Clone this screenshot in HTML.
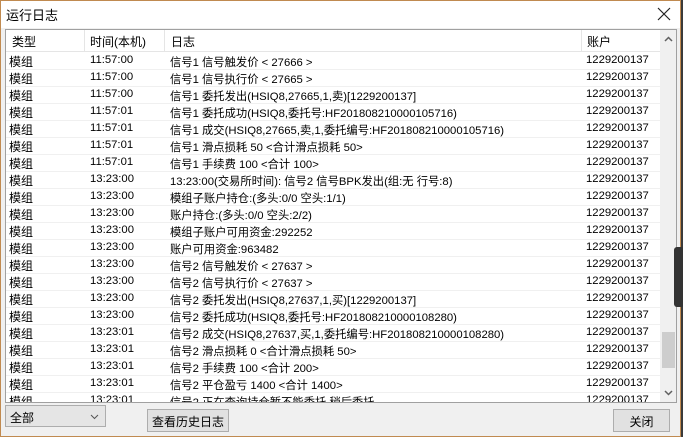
<!DOCTYPE html>
<html><head><meta charset="utf-8"><style>
*{margin:0;padding:0;box-sizing:border-box}
body{width:683px;height:437px;overflow:hidden;background:#3a3a3a;font-family:"Liberation Sans","Noto Sans CJK SC",sans-serif;font-size:12px;color:#000}
.win{position:absolute;left:0;top:0;width:681px;height:437px;border:1px solid #c08a50;background:#f0f0f0}
.title{position:absolute;left:0;top:0;width:679px;height:27px;background:#fff}
.title span{position:absolute;left:5px;top:4px;font-size:13px}
.close{position:absolute;left:656px;top:6px}
.list{position:absolute;left:4px;top:28px;width:672px;height:374px;background:#fff;border:1px solid #a0a0a0;overflow:hidden}
.hdr{position:absolute;left:0;top:0;width:654px;height:22px;background:#fff;border-bottom:1px solid #e5e5e5}
.hdr div{position:absolute;top:3px;font-size:12px}
.sep{position:absolute;top:0;width:1px;height:22px;background:#e5e5e5}
.row{position:absolute;left:0;width:654px;height:17px;border-bottom:1px solid #f0f0f0;white-space:nowrap;font-size:11.3px}
.row div{position:absolute;top:1px}
.row .c1{font-size:12px;top:0}
.c1{left:3px}.c2{left:84px}.c3{left:164px}.c4{left:580px}
.sb{position:absolute;left:654px;top:0;width:17px;height:372px;background:#f0f0f0}
.thumb{position:absolute;left:2px;top:302px;width:13px;height:36px;background:#cdcdcd}
.btn{position:absolute;background:#e1e1e1;border:1px solid #adadad;font-size:12px;padding:3px 4px}
.widget{position:absolute;left:673px;top:246px;width:10px;height:60px;background:#333;border-radius:3px}
</style></head><body>
<div class="win">
<div class="title"><span>运行日志</span><svg class="close" width="14" height="14"><path d="M1 1L13 13M13 1L1 13" stroke="#222" stroke-width="1.2"/></svg></div>
<div class="list">
<div class="hdr"><div style="left:6px">类型</div><div style="left:84px">时间(本机)</div><div style="left:165px">日志</div><div style="left:581px">账户</div>
<span class="sep" style="left:78px"></span><span class="sep" style="left:158px"></span><span class="sep" style="left:575px"></span></div>
<div class="sb"><svg style="position:absolute;left:4px;top:6px" width="9" height="6"><path d="M1 5L4.5 1.5L8 5" stroke="#606060" fill="none" stroke-width="1.5"/></svg><div class="thumb"></div><svg style="position:absolute;left:4px;top:360px" width="9" height="6"><path d="M1 1L4.5 4.5L8 1" stroke="#606060" fill="none" stroke-width="1.5"/></svg></div>
</div>
<div class="widget"></div>
<div style="position:absolute;left:4px;top:404px;width:101px;height:22px;background:#e5e5e5;border:1px solid #adadad;padding:3px 4px">全部<svg style="position:absolute;right:6px;top:8px" width="9" height="6"><path d="M1 1L4.5 4.5L8 1" stroke="#555" fill="none"/></svg></div>
<div class="btn" style="left:146px;top:408px;height:23px;width:82px">查看历史日志</div>
<div class="btn" style="left:612px;top:408px;height:23px;width:57px;text-align:center">关闭</div>
</div>
<script>
var d=[["11:57:00","信号1 信号触发价 &lt; 27666 &gt;"],["11:57:00","信号1 信号执行价 &lt; 27665 &gt;"],["11:57:00","信号1 委托发出(HSIQ8,27665,1,卖)[1229200137]"],["11:57:01","信号1 委托成功(HSIQ8,委托号:HF201808210000105716)"],["11:57:01","信号1 成交(HSIQ8,27665,卖,1,委托编号:HF201808210000105716)"],["11:57:01","信号1 滑点损耗 50 &lt;合计滑点损耗 50&gt;"],["11:57:01","信号1 手续费 100 &lt;合计 100&gt;"],["13:23:00","13:23:00(交易所时间): 信号2 信号BPK发出(组:无 行号:8)"],["13:23:00","模组子账户持仓:(多头:0/0 空头:1/1)"],["13:23:00","账户持仓:(多头:0/0 空头:2/2)"],["13:23:00","模组子账户可用资金:292252"],["13:23:00","账户可用资金:963482"],["13:23:00","信号2 信号触发价 &lt; 27637 &gt;"],["13:23:00","信号2 信号执行价 &lt; 27637 &gt;"],["13:23:00","信号2 委托发出(HSIQ8,27637,1,买)[1229200137]"],["13:23:00","信号2 委托成功(HSIQ8,委托号:HF201808210000108280)"],["13:23:01","信号2 成交(HSIQ8,27637,买,1,委托编号:HF201808210000108280)"],["13:23:01","信号2 滑点损耗 0 &lt;合计滑点损耗 50&gt;"],["13:23:01","信号2 手续费 100 &lt;合计 200&gt;"],["13:23:01","信号2 平仓盈亏 1400 &lt;合计 1400&gt;"],["13:23:01","信号2 正在查询持仓暂不能委托,稍后委托"]];
var l=document.querySelector('.list'),h='';
d.forEach(function(r,i){h+='<div class="row" style="top:'+(23+i*17)+'px"><div class="c1">模组</div><div class="c2">'+r[0]+'</div><div class="c3">'+r[1]+'</div><div class="c4">1229200137</div></div>';});
l.insertAdjacentHTML('beforeend',h);
</script>
</body></html>
